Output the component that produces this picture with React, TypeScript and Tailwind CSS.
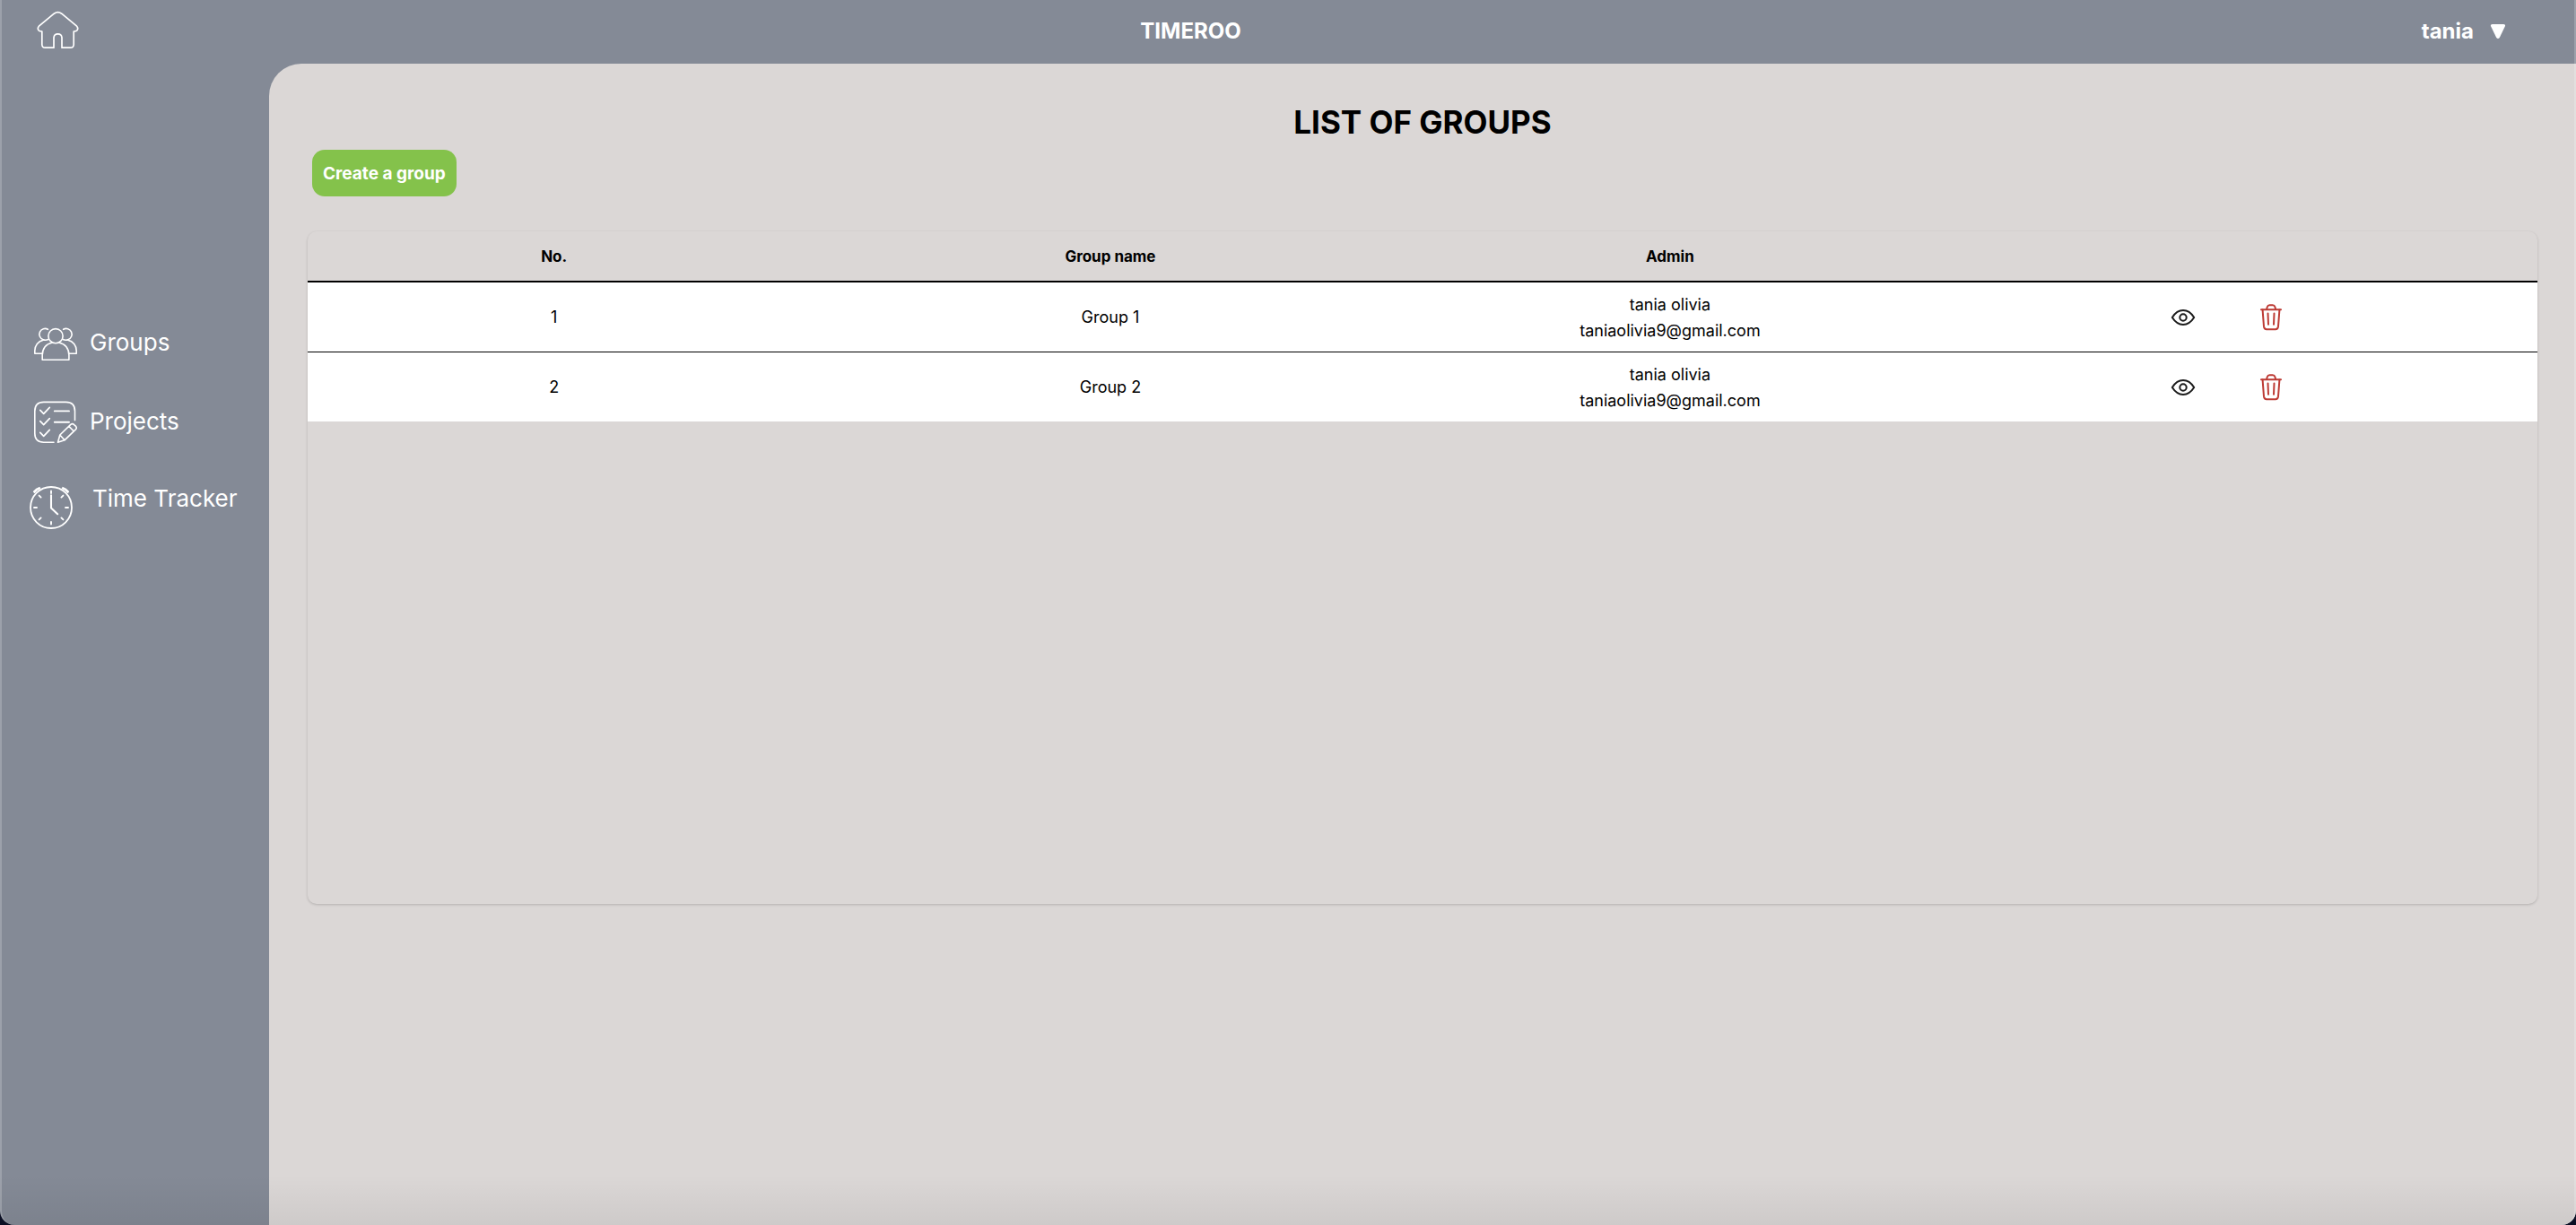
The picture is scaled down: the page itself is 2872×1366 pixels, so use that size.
import React from "react";

type Group = { id: number; name: string; admin: string; email: string };

const groups: Group[] = [
  { id: 1, name: "Group 1", admin: "tania olivia", email: "taniaolivia9@gmail.com" },
  { id: 2, name: "Group 2", admin: "tania olivia", email: "taniaolivia9@gmail.com" },
];

const line = {
  fill: "none",
  stroke: "currentColor",
  strokeLinecap: "round" as const,
  strokeLinejoin: "round" as const,
};

function HomeIcon() {
  return (
    <svg {...line} strokeWidth="1.7" viewBox="0 0 47 44" className="h-11 w-[47px]" aria-hidden="true">
      <path d="M19.3 3.2Q23.5 0 27.7 3.2L44.6 17.2Q46.6 19.4 45 21.7Q44 23 41.2 23V37.8Q41 41.2 37.6 41.2H28V29.8Q27.6 25.8 23.5 25.8Q19.4 25.8 19 29.8V41.2H9.4Q6 41.2 5.8 37.8V23Q3 23 2 21.7Q.4 19.4 2.4 17.2Z" />
    </svg>
  );
}

function GroupsIcon() {
  return (
    <svg {...line} strokeWidth="1.6" viewBox="0 0 48 48" className="size-12 shrink-0" aria-hidden="true">
      <circle cx="24" cy="16.7" r="8.1" />
      <path d="M9.2 43.3V38C9.2 30.5 13.5 25.3 19.6 24.2M28.4 24.2C34.5 25.3 38.9 30.5 38.9 38V43.3H9.2" />
      <path d="M15.4 9.3A6.3 6.3 0 1 0 10.2 20.7Q12.9 21.8 15.8 20.5M32.6 9.3A6.3 6.3 0 1 1 37.8 20.7Q35.1 21.8 32.2 20.5" />
      <path d="M10.2 21.2C4.5 22.4.8 27.5.8 33V36.2H9M37.8 21.2C43.5 22.4 47.2 27.5 47.2 33V36.2H39" />
    </svg>
  );
}

function ProjectsIcon() {
  return (
    <svg {...line} strokeWidth="1.6" viewBox="0 0 48 48" className="size-12 shrink-0" aria-hidden="true">
      <path d="M22 47.2H10.8Q.8 47.2.8 37.2V12.4Q.8 2.4 10.8 2.4H35.5Q45.5 2.4 45.5 12.4V22.6" />
      <path d="M22.8 12.4H39M22.8 24.7H39" strokeWidth="1.9" />
      <path d="M6.8 11.4L10.7 15.4L17.3 8.4M6.8 23.6L10.7 27.6L17.3 20.6M6.8 36.4L10.7 40.4L17.3 33.4" strokeWidth="1.7" />
      <path d="M26.5 47.2L28.8 39L40.8 27.4Q42.8 25.8 44.6 27.6L46.6 29.4Q48 31.2 46.4 32.9L34 44.8ZM28.8 39L34 44.8M38.8 29.4L44.4 35" />
    </svg>
  );
}

function ClockIcon() {
  return (
    <svg {...line} strokeWidth="1.8" viewBox="0 0 48 48" className="size-12 shrink-0" aria-hidden="true">
      <circle cx="24" cy="24" r="23" />
      <path d="M24 5.5V8M24 40V42.6M5 24H8M40 24H43M10.6 10.6L12.6 12.6M37.4 10.6L35.4 12.6M10.6 37.4L12.6 35.4M37.4 37.4L35.4 35.4" strokeWidth="1.9" />
      <path d="M24 10.2V24.4L31.2 31.2" strokeWidth="2.1" />
      <path d="M4.6 6.2Q7.4 2.6 11 1.6M5.4 7.2Q8 4.2 11.6 2.6M43.4 6.2Q40.6 2.6 37 1.6M42.6 7.2Q40 4.2 36.4 2.6" strokeWidth="1.5" />
    </svg>
  );
}

function EyeIcon() {
  return (
    <svg {...line} strokeWidth="2" viewBox="0 0 28 20" className="h-5 w-7" aria-hidden="true">
      <path d="M1.8 10C8.6-.6 19.4-.6 26.2 10C19.4 20.6 8.6 20.6 1.8 10Z" />
      <circle cx="14" cy="10" r="3.7" />
    </svg>
  );
}

function TrashIcon() {
  return (
    <svg {...line} strokeWidth="2" viewBox="0 0 24 30" className="h-[30px] w-6" aria-hidden="true">
      <path d="M1 6.3H23M7 6L7.8 3.2Q8.4 1.3 10.4 1.3H13.8Q15.8 1.3 16.4 3.2L17.2 6" />
      <path d="M2.6 6.6L4 25.2Q4.4 28.2 7 28.2H17Q19.6 28.2 20 25.2L21.4 6.6" />
      <path d="M8.5 10.4L9 22.8M15.5 10.4L15 22.8" />
    </svg>
  );
}

const links = [
  { label: "Groups", icon: <GroupsIcon />, className: "flex items-center gap-3.5 pl-[38px]" },
  { label: "Projects", icon: <ProjectsIcon />, className: "flex items-center gap-3.5 pl-[38px]" },
  { label: "Time Tracker", icon: <ClockIcon />, className: "mt-2 flex items-start gap-[22px] pl-[33px]" },
];

export default function App() {
  return (
    <div className="min-h-screen bg-[#0b0f24] font-['Inter','Liberation_Sans',sans-serif] text-black">
      <div className="relative flex min-h-screen flex-col overflow-hidden rounded-b-2xl bg-[#848a96]">
        <header className="flex h-[71px] items-center pb-0.5 text-2xl font-bold text-white">
          <a href="#home" aria-label="Home" className="-mt-0.5 ml-[41px]">
            <HomeIcon />
          </a>
          <span className="flex-1 text-center">TIMEROO</span>
          <div className="flex w-[305px] justify-end pr-[78px]">
            <button type="button" className="flex items-center gap-[18px]">
              tania
              <svg viewBox="0 0 18 18" className="size-[18px]" fill="currentColor" aria-hidden="true">
                <path d="M2.6 1H15.4Q17.8 1.2 16.8 3.4L11 15.4Q9 18.4 7 15.4L1.2 3.4Q.2 1.2 2.6 1Z" />
              </svg>
            </button>
          </div>
        </header>

        <div className="flex flex-1">
          <nav className="w-[300px] shrink-0 pt-[287px] text-white">
            <ul className="flex flex-col gap-10">
              {links.map((l) => (
                <li key={l.label}>
                  <a href="#nav" className={l.className}>
                    {l.icon}
                    <span className="text-[26px] leading-7">{l.label}</span>
                  </a>
                </li>
              ))}
            </ul>
          </nav>

          <main className="min-w-0 flex-1 rounded-tl-[36px] bg-[#dbd7d6] px-[43px] pt-[45px]">
            <h1 className="text-center text-[35px] leading-10 font-bold">LIST OF GROUPS</h1>
            <button
              type="button"
              className="mt-[11px] ml-[5px] block h-[52px] rounded-[14px] bg-[#84c24b] px-3 pt-0.5 text-[19px] font-bold text-white"
            >
              Create a group
            </button>

            <section className="mt-[39px] min-h-[750px] overflow-hidden rounded-[10px] shadow-[0_1px_3px_rgba(0,0,0,0.18)]">
              <table className="w-full table-fixed border-separate border-spacing-0 text-center">
                <colgroup>
                  <col className="w-[22.1%]" />
                  <col className="w-[27.8%]" />
                  <col className="w-[22.4%]" />
                  <col className="w-[27.7%]" />
                </colgroup>
                <thead className="text-[17px]">
                  <tr className="*:h-[57px] *:border-b-2 *:border-black *:pt-0.5">
                    <th scope="col">No.</th>
                    <th scope="col">Group name</th>
                    <th scope="col">Admin</th>
                    <th scope="col" aria-label="Actions" />
                  </tr>
                </thead>
                <tbody className="bg-white text-lg leading-[29px]">
                  {groups.map((g) => (
                    <tr
                      key={g.id}
                      className="*:h-[78px] *:border-b *:border-black last:*:h-[77px] last:*:border-b-0"
                    >
                      <td>{g.id}</td>
                      <td>{g.name}</td>
                      <td className="pt-px">
                        <p>{g.admin}</p>
                        <p>{g.email}</p>
                      </td>
                      <td>
                        <div className="flex items-center justify-center gap-[72px] pr-1.5">
                          <button type="button" aria-label={`View ${g.name}`} className="text-[#1c1c1c]">
                            <EyeIcon />
                          </button>
                          <button type="button" aria-label={`Delete ${g.name}`} className="text-[#bd3b35]">
                            <TrashIcon />
                          </button>
                        </div>
                      </td>
                    </tr>
                  ))}
                </tbody>
              </table>
            </section>
          </main>
        </div>

        <div className="pointer-events-none absolute inset-x-0 bottom-0 h-14 bg-linear-to-t from-black/6 to-transparent" />
        <div className="pointer-events-none absolute inset-0 rounded-b-2xl border-x-2 border-white/20" />
      </div>
    </div>
  );
}
